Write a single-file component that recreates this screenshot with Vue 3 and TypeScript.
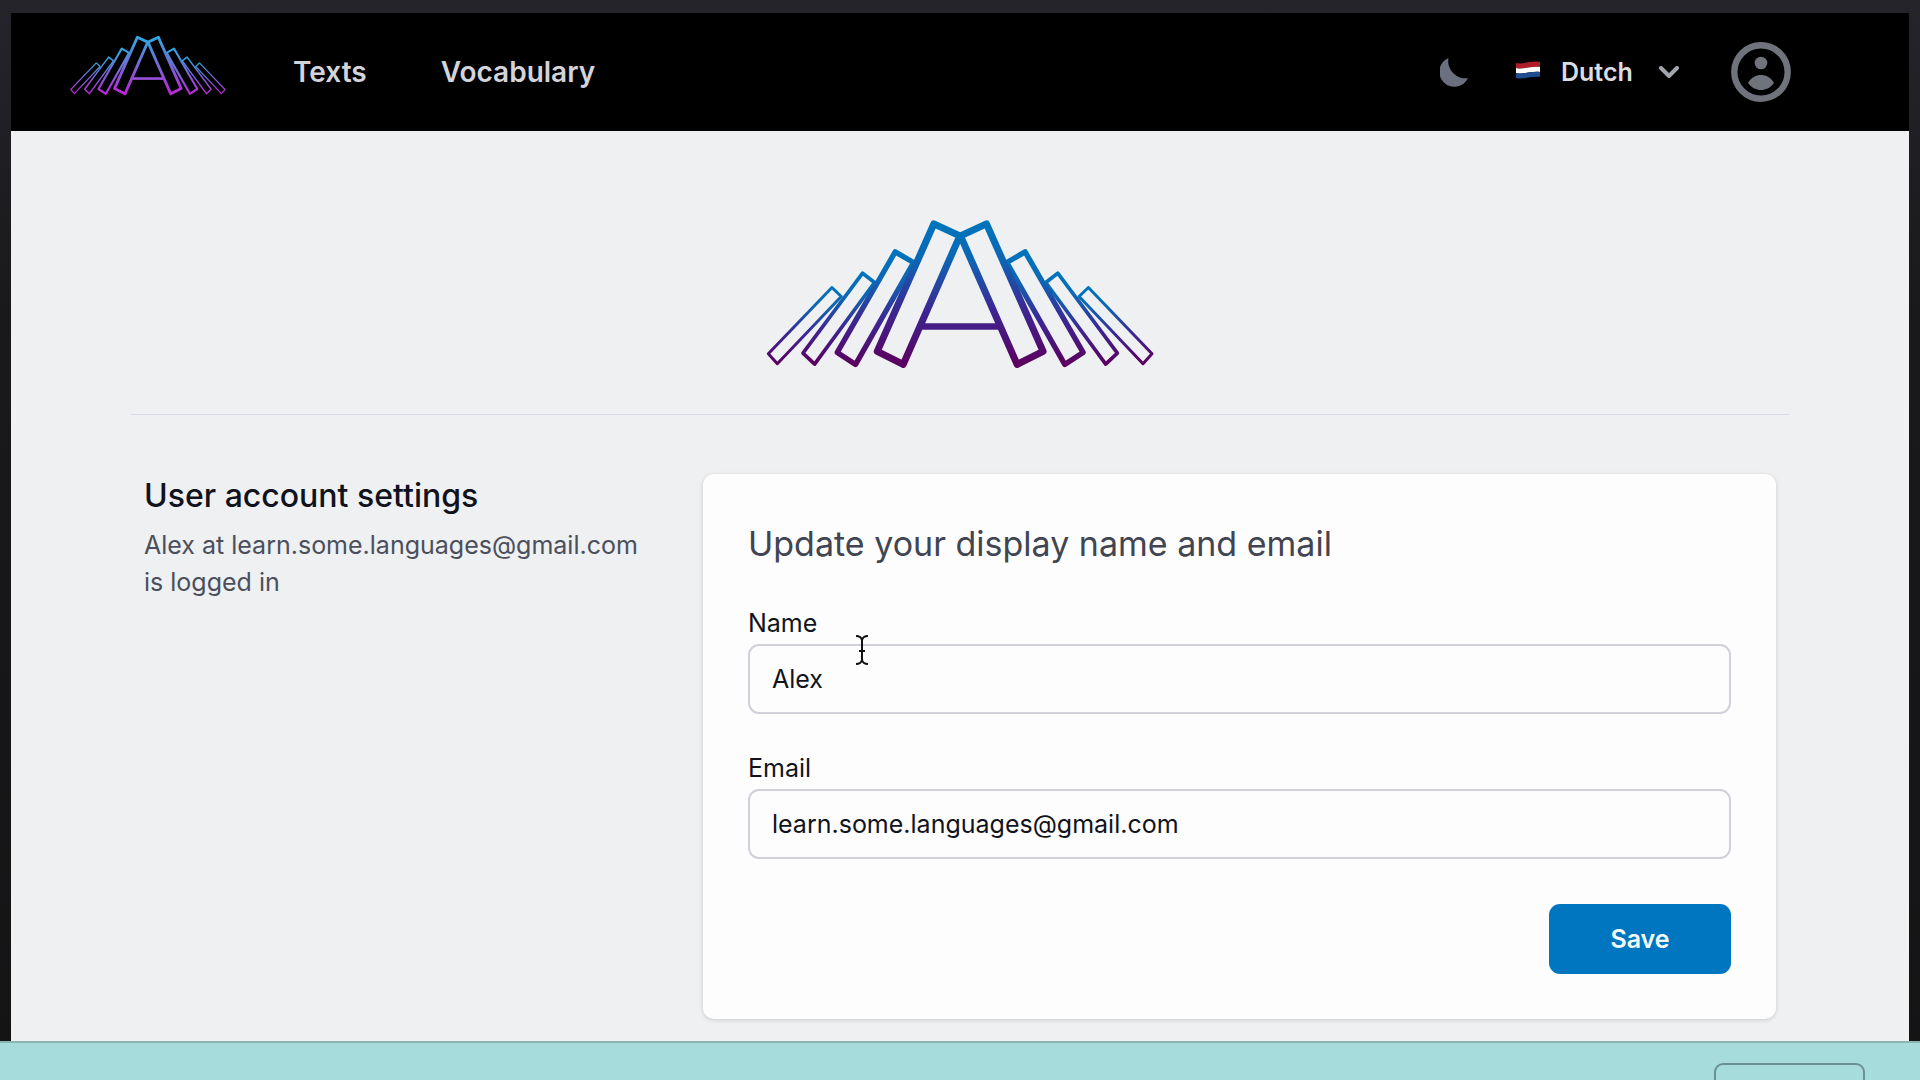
<script setup lang="ts">
import { ref } from 'vue'

interface Book {
  path: string
  weight: number
}

// Each book leans towards the centre; the two tallest form the letter A.
const books: Book[] = [
  { path: 'M274 263 L302 290 L110 492 L83 462 Z', weight: 9 },
  { path: 'M366 220 L402 248 L222 493 L187 460 Z', weight: 11 },
  { path: 'M464 156 L519 188 L345 494 L290 458 Z', weight: 16 },
  { path: 'M580 72 L658 108 L488 494 L410 455 Z', weight: 21 },
]

const languages = ['Dutch', 'English', 'German']
const language = ref('Dutch')
const name = ref('Alex')
const email = ref('learn.some.languages@gmail.com')
</script>

<template>
  <div class="app">
    <div class="window">
      <header class="navbar">
        <a href="#" class="brand" aria-label="Home">
          <svg class="brand-logo" viewBox="70 55 1180 455" aria-hidden="true">
            <defs>
              <linearGradient id="neon" x1="0" y1="0" x2="0" y2="1">
                <stop offset="0" stop-color="#2fa8e0" />
                <stop offset="0.5" stop-color="#7768d6" />
                <stop offset="1" stop-color="#bb26d8" />
              </linearGradient>
            </defs>
            <g class="books" stroke="url(#neon)">
              <path v-for="b in books" :key="b.path" :d="b.path" :stroke-width="b.weight" />
            </g>
            <g class="books" stroke="url(#neon)" transform="translate(1318 0) scale(-1 1)">
              <path v-for="b in books" :key="b.path" :d="b.path" :stroke-width="b.weight" />
            </g>
            <path d="M545 380 H773" stroke="#984fd8" stroke-width="20" />
          </svg>
        </a>
        <nav class="links">
          <a href="#">Texts</a>
          <a href="#">Vocabulary</a>
        </nav>
        <div class="tools">
          <button type="button" class="icon-button" aria-label="Dark mode">
            <svg class="moon" viewBox="0 0 28 30" aria-hidden="true">
              <path d="M8.500 1 A17 17 0 0 0 28 21 A15 15 0 1 1 8.500 1 Z" fill="#6b7080" />
            </svg>
          </button>
          <div class="language">
            <svg class="flag" viewBox="0 0 24 18" aria-hidden="true">
              <path d="M0 2 C8 4 14 -1 24 1 V6 C14 5 8 9 0 7 Z" fill="#b01c28" />
              <path d="M0 7 C8 9 14 5 24 6 V11 C14 10 8 14 0 12 Z" fill="#ffffff" />
              <path d="M0 12 C8 14 14 10 24 11 V16 C14 15 8 19 0 17 Z" fill="#1f4a94" />
            </svg>
            <select v-model="language" aria-label="Language">
              <option v-for="l in languages" :key="l">{{ l }}</option>
            </select>
            <svg class="chevron" viewBox="0 0 20 12" aria-hidden="true">
              <path d="M2 2 L10 10 L18 2" fill="none" stroke="#a3a5ad" stroke-width="4" stroke-linecap="round" stroke-linejoin="round" />
            </svg>
          </div>
          <button type="button" class="icon-button" aria-label="Account">
            <svg class="avatar" viewBox="0 0 60 60" aria-hidden="true">
              <circle cx="30" cy="30" r="26.7" fill="none" stroke="#70727c" stroke-width="6.4" />
              <circle cx="30" cy="21" r="6.3" fill="#70727c" />
              <path d="M17 41 C20 35.500 25 33 30 33 C35 33 40 35.500 43 41 C39 46 35 48 30 48 C25 48 21 46 17 41 Z" fill="#70727c" />
            </svg>
          </button>
        </div>
      </header>

      <main class="page">
        <svg class="hero-logo" viewBox="70 55 1180 455" aria-hidden="true">
          <defs>
            <linearGradient id="ink" x1="0" y1="0" x2="0" y2="1">
              <stop offset="0" stop-color="#0074bb" />
              <stop offset="0.25" stop-color="#0d66b4" />
              <stop offset="0.6" stop-color="#3b2894" />
              <stop offset="1" stop-color="#5c005f" />
            </linearGradient>
          </defs>
          <g class="books" stroke="url(#ink)">
            <path v-for="b in books" :key="b.path" :d="b.path" :stroke-width="b.weight" />
          </g>
          <g class="books" stroke="url(#ink)" transform="translate(1318 0) scale(-1 1)">
            <path v-for="b in books" :key="b.path" :d="b.path" :stroke-width="b.weight" />
          </g>
          <path d="M545 380 H773" stroke="#451c86" stroke-width="20" />
        </svg>
        <hr class="rule" />
        <div class="columns">
          <section class="intro">
            <h1>User account settings</h1>
            <p>{{ name }} at {{ email }} is logged in</p>
          </section>
          <form class="card" @submit.prevent>
            <h2>Update your display name and email</h2>
            <div class="field">
              <label for="name">Name</label>
              <input id="name" v-model="name" type="text" />
              <svg class="caret" viewBox="0 0 14 30" aria-hidden="true">
                <path d="M1 1 Q6 1 7 5 Q8 1 13 1 M7 5 V25 M1 29 Q6 29 7 25 Q8 29 13 29 M4 16 H10" fill="none" stroke="#111111" stroke-width="2" />
              </svg>
            </div>
            <div class="field">
              <label for="email">Email</label>
              <input id="email" v-model="email" type="email" />
            </div>
            <div class="actions">
              <button type="submit" class="save">Save</button>
            </div>
          </form>
        </div>
      </main>
    </div>
    <footer class="dock">
      <button type="button" class="dock-button" aria-label="Open"></button>
    </footer>
  </div>
</template>

<style>
body {
  margin: 0;
}
</style>

<style scoped>
.app {
  display: flex;
  flex-direction: column;
  height: 100vh;
  overflow: hidden;
  background: linear-gradient(#24242a, #19191b 30%, #141415);
  font-family: Inter, "Liberation Sans", sans-serif;
  font-size: 25px;
  line-height: 37px;
  color: #11131c;
}

.window {
  flex: none;
  margin: 13px 11px 0;
  background: #eef0f2;
}

.navbar {
  display: flex;
  align-items: center;
  height: 118px;
  padding: 0 118px 0 58px;
  background: #000000;
  font-weight: 600;
}

.brand {
  display: flex;
  padding-bottom: 14px;
}

.brand-logo {
  width: 158px;
  height: 61px;
}

.books {
  fill: none;
  stroke-linejoin: round;
}

.links {
  display: flex;
  gap: 74px;
  margin-left: 66px;
  font-size: 28px;
}

.links a {
  color: #d3d4da;
  text-decoration: none;
}

.tools {
  display: flex;
  align-items: center;
  margin-left: auto;
}

.icon-button {
  display: flex;
  padding: 0;
  border: 0;
  background: none;
}

.moon {
  width: 28px;
  height: 30px;
}

.language {
  display: flex;
  align-items: center;
  margin: 0 52px 0 48px;
}

.flag {
  width: 24px;
  height: 18px;
  padding-bottom: 4px;
}

.language select {
  appearance: none;
  width: 98px;
  margin-left: 21px;
  padding: 0;
  border: 0;
  background: none;
  color: #dcdde2;
  font: inherit;
}

.chevron {
  width: 20px;
  height: 12px;
}

.avatar {
  width: 60px;
  height: 60px;
}

.page {
  display: flex;
  flex-direction: column;
  padding: 87px 120px 22px;
}

.hero-logo {
  align-self: center;
  width: 393px;
  height: 152px;
}

.rule {
  width: 100%;
  margin: 44px 0 59px;
  border: 0;
  border-top: 1px solid #dadbe4;
}

.columns {
  display: grid;
  grid-template-columns: repeat(3, 1fr);
  gap: 45px;
  padding: 0 13px;
}

.intro h1 {
  margin: 0 0 9px;
  font-size: 32px;
  font-weight: 500;
  line-height: 44px;
}

.intro p {
  margin: 0;
  color: #4b4f5c;
}

.card {
  grid-column: span 2;
  padding: 45px;
  border-radius: 11px;
  background: #fdfdfd;
  box-shadow: 0 1px 4px rgba(0, 0, 0, 0.16);
}

.card h2 {
  margin: 0;
  color: #414552;
  font-size: 34px;
  font-weight: 400;
  line-height: 50px;
}

.field {
  position: relative;
  display: flex;
  flex-direction: column;
  gap: 2px;
  margin-top: 36px;
}

.field input {
  box-sizing: border-box;
  height: 70px;
  padding: 0 22px;
  border: 2px solid #d0d1d9;
  border-radius: 11px;
  background: transparent;
  color: inherit;
  font: inherit;
}

.caret {
  position: absolute;
  top: 30px;
  left: 107px;
  width: 14px;
  height: 30px;
}

.actions {
  display: flex;
  justify-content: flex-end;
  margin-top: 45px;
}

.save {
  width: 182px;
  height: 70px;
  border: 0;
  border-radius: 11px;
  background: #0076c0;
  color: #f4fbff;
  font: inherit;
  font-weight: 600;
}

.dock {
  display: flex;
  flex: 1;
  justify-content: flex-end;
  align-items: flex-start;
  padding: 20px 55px 0;
  border-top: 2px solid #8ab5b0;
  background: #a7dcdd;
}

.dock-button {
  width: 151px;
  height: 46px;
  border: 2px solid #6b9092;
  border-radius: 9px;
  background: transparent;
}
</style>
